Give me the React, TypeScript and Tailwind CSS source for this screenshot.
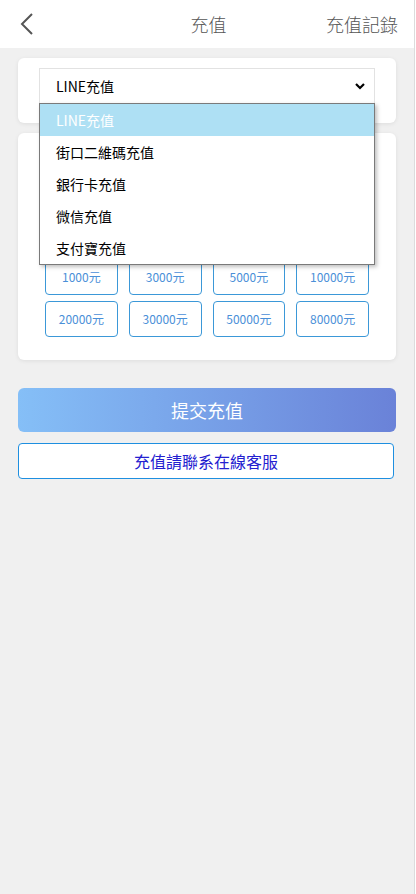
import React, { useState } from 'react';

const amounts = ['1000元', '3000元', '5000元', '10000元', '20000元', '30000元', '50000元', '80000元'];
const channels = ['LINE充值', '街口二維碼充值', '銀行卡充值', '微信充值', '支付寶充值'];

const App = () => {
  const [channel] = useState(channels[0]);

  return (
    <div
      className="min-h-[894px] w-[415px] bg-[#f0f0f0] border-r border-[#dcdcdc]"
      style={{ fontFamily: '"Noto Sans CJK TC", "Noto Sans", sans-serif' }}
    >
      {/* header */}
      <div className="flex h-12 items-center bg-white pl-[19px] pr-4">
        <div className="w-[78px]">
          <svg width="16" height="24" viewBox="0 0 16 24" fill="none" stroke="#555" strokeWidth="2">
            <path d="M13 2 L3 12 L13 22" />
          </svg>
        </div>
        <h2 className="flex-1 text-center text-[18px] font-light text-[#555]">充值</h2>
        <span className="w-[78px] text-right text-[18px] font-light text-[#555]">充值記錄</span>
      </div>

      <div className="flex flex-col px-[18px] pt-[10px]">
        {/* channel select */}
        <div className="relative rounded-md bg-white px-[21px] pb-5 pt-[10px] shadow-[0_1px_4px_rgba(0,0,0,0.08)]">
          <div className="flex h-[35px] items-center justify-between border border-b-0 border-[#e2e2e2] pl-4 pr-2">
            <span className="text-[14px] text-black">{channel}</span>
            <svg width="12" height="8" viewBox="0 0 12 8" fill="none" stroke="#000" strokeWidth="2.2">
              <path d="M2 2 L6 6 L10 2" />
            </svg>
          </div>
          <ul className="absolute left-[21px] right-[21px] top-[45px] z-10 border border-[#7a7a7a] bg-white shadow-[2px_2px_4px_rgba(0,0,0,0.25)]">
            {channels.map((c, i) => (
              <li
                key={c}
                className={
                  i === 0
                    ? 'flex h-8 items-center bg-[#aee0f4] pl-4 text-[14px] text-white'
                    : 'flex h-8 items-center pl-4 text-[14px] text-black'
                }
              >
                {c}
              </li>
            ))}
          </ul>
        </div>

        {/* amount card */}
        <div className="mt-[10px] rounded-md bg-white px-[27px] pb-[23px] pt-[126px] shadow-[0_1px_4px_rgba(0,0,0,0.08)]">
          <div className="grid grid-cols-4 gap-x-[11px] gap-y-[6px]">
            {amounts.map((a) => (
              <button
                key={a}
                className="flex h-[36px] items-center justify-center rounded-[4px] border border-[#3b98d8] text-[12px] text-[#4a8fd8]"
              >
                {a}
              </button>
            ))}
          </div>
        </div>

        <button className="mt-[28px] flex h-[44px] items-center justify-center rounded-md bg-gradient-to-r from-[#85bff7] to-[#6a82d8] text-[18px] text-white">
          提交充值
        </button>
        <button className="mr-[2px] mt-[11px] flex h-[36px] items-center justify-center rounded-[4px] border border-[#1e8fe0] bg-white text-[16px] text-[#2320d0]">
          充值請聯系在線客服
        </button>
      </div>
    </div>
  );
};

export default App;
